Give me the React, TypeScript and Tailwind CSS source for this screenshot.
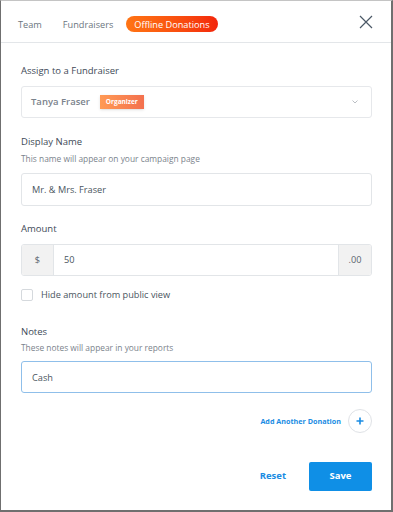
import React, { useState } from 'react'

// offline donation modal
const tabs = ['Team', 'Fundraisers', 'Offline Donations']

export default function App() {
  const [active, setActive] = useState('Offline Donations')
  const [hide, setHide] = useState(false)

  return (
    <div className="w-[393px] h-[512px] bg-white border-l border-r-2 border-b-2 border-t border-[#6f6f6f] border-t-[#c4c4c4] font-['Open_Sans',sans-serif] text-[#3e4a57] flex flex-col overflow-hidden">
      {/* Header tabs */}
      <div className="h-[42px] shrink-0 flex items-center pl-[9px] pr-[18px] border-b border-[#e3e6e9]">
        <ul className="flex items-center gap-[5px]">
          {tabs.map(t => (
            <li key={t}>
              <button
                onClick={() => setActive(t)}
                className={`px-[8px] h-[16px] rounded-full text-[9.2px] leading-none ${
                  active === t
                    ? 'text-white bg-gradient-to-r from-[#ff7414] to-[#f3240c]'
                    : 'text-[#6b7580]'
                }`}
              >
                {t}
              </button>
            </li>
          ))}
        </ul>
        <button className="ml-auto text-[#4b5866]" aria-label="Close">
          <svg width="14" height="14" viewBox="0 0 14 14" fill="none" stroke="currentColor" strokeWidth="1.2">
            <path d="M1 1L13 13M13 1L1 13" />
          </svg>
        </button>
      </div>

      <div className="flex flex-col pl-[20px] pr-[19px] pt-[21px]">
        {/* Fundraiser select */}
        <label className="text-[9.5px] leading-[14px]">Assign to a Fundraiser</label>
        <div className="mt-[8px] h-[32px] flex items-center pl-[9px] pr-[13px] rounded-[3px] border border-[#e6e8eb]">
          <span className="text-[9.5px] font-semibold text-[#7b838c]">Tanya Fraser</span>
          <span className="ml-[10px] px-[6px] h-[14px] flex items-center text-[6.5px] font-bold text-white bg-gradient-to-r from-[#ff9a55] to-[#f3704e] shadow-sm">
            Organizer
          </span>
          <svg className="ml-auto text-[#b3b8bd]" width="6" height="4" viewBox="0 0 6 4" fill="none" stroke="currentColor" strokeWidth="0.9">
            <path d="M0.5 0.5L3 3L5.5 0.5" />
          </svg>
        </div>

        {/* Display name */}
        <label className="mt-[17px] text-[9.5px] leading-[14px]">Display Name</label>
        <p className="mt-[4px] text-[8.4px] leading-[12px] text-[#7b838c]">This name will appear on your campaign page</p>
        <input
          defaultValue="Mr. & Mrs. Fraser"
          className="mt-[8px] h-[33px] px-[10px] rounded-[3px] border border-[#e2e5e8] text-[9.2px] text-[#4a5560] outline-none"
        />

        {/* Amount */}
        <label className="mt-[16px] text-[9.5px] leading-[14px]">Amount</label>
        <div className="mt-[8px] h-[32px] flex rounded-[3px] border border-[#e2e5e8] overflow-hidden text-[9.2px] text-[#5c6670]">
          <span className="w-[32px] flex items-center justify-center bg-[#f2f2f2] border-r border-[#e2e5e8]">$</span>
          <input defaultValue="50" className="flex-1 min-w-0 px-[10px] outline-none text-[#4a5560]" />
          <span className="w-[33px] flex items-center justify-center bg-[#f2f2f2] border-l border-[#e2e5e8]">.00</span>
        </div>
        <label className="mt-[13px] flex items-center gap-[8px] cursor-pointer">
          <span
            onClick={() => setHide(!hide)}
            className={`w-[12px] h-[12px] rounded-[2px] border ${hide ? 'bg-[#1490e6] border-[#1490e6]' : 'border-[#d5d9dd] bg-white'}`}
          />
          <span className="text-[9.2px] leading-[12px] text-[#4a5560]">Hide amount from public view</span>
        </label>

        {/* Notes */}
        <label className="mt-[24px] text-[9.5px] leading-[14px]">Notes</label>
        <p className="mt-[3px] text-[8.4px] leading-[12px] text-[#7b838c]">These notes will appear in your reports</p>
        <input
          defaultValue="Cash"
          className="mt-[7px] h-[32px] px-[10px] rounded-[3px] border border-[#8fbfea] text-[9.2px] text-[#4a5560] outline-none"
        />

        {/* Add another */}
        <div className="mt-[16px] flex items-center justify-end gap-[7px]">
          <span className="text-[7.2px] font-bold text-[#1a8ce3]">Add Another Donation</span>
          <button className="w-[24px] h-[24px] rounded-full border border-[#dfe2e6] flex items-center justify-center text-[#1a8ce3]">
            <svg width="8" height="8" viewBox="0 0 8 8" fill="none" stroke="currentColor" strokeWidth="1.6">
              <path d="M4 0.5V7.5M0.5 4H7.5" />
            </svg>
          </button>
        </div>

        {/* Actions */}
        <div className="mt-[29px] flex items-center justify-end gap-[23px]">
          <button className="text-[9.5px] font-bold text-[#1a8ce3]">Reset</button>
          <button className="w-[63px] h-[29px] rounded-[2px] bg-[#0f8fe6] text-white text-[9.5px] font-bold">Save</button>
        </div>
      </div>
    </div>
  )
}
